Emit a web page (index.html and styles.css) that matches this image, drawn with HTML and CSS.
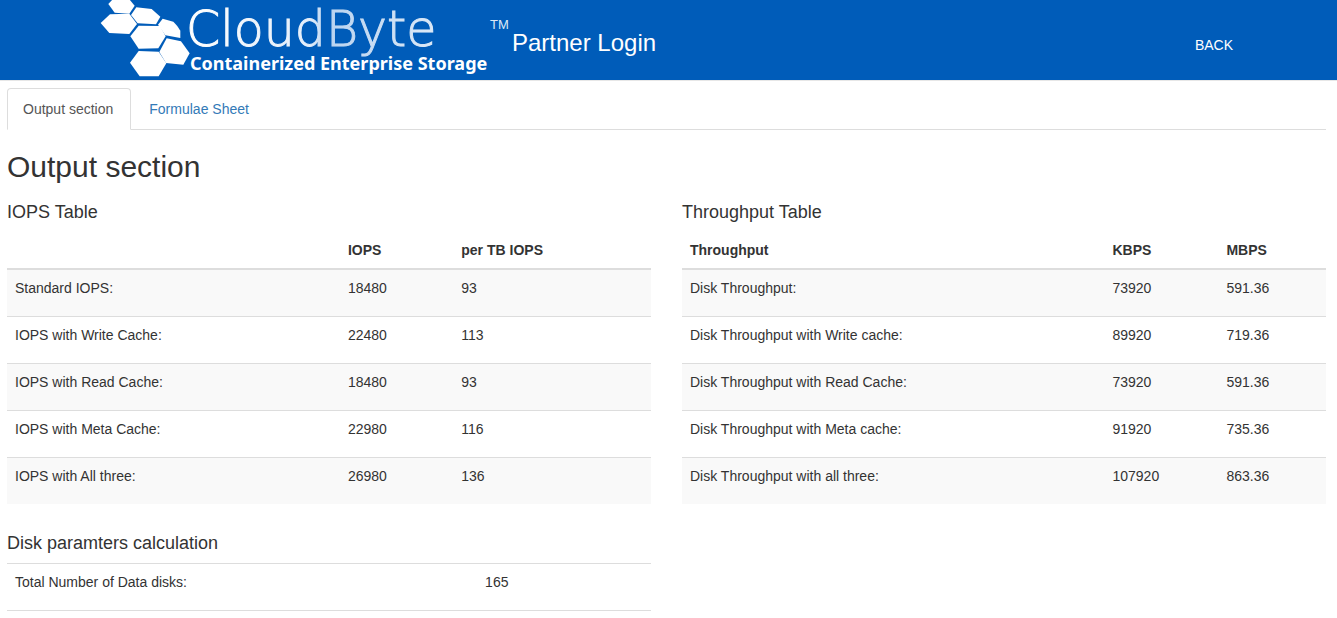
FILE: index.html
```html
<!DOCTYPE html>
<html lang="en">
<head>
<meta charset="utf-8">
<title>CloudByte Partner Login</title>
<link rel="stylesheet" href="styles.css">
</head>
<body>
<header class="navbar">
  <a class="brand" href="#">
    <svg class="logo" width="410" height="80" viewBox="0 0 410 80" role="img" aria-label="CloudByte Containerized Enterprise Storage">
      <defs>
        <linearGradient id="wordmark" x1="0" x2="1" y1="0" y2="0">
          <stop offset="0" stop-color="#fff"/>
          <stop offset="0.5" stop-color="#e4eefa"/>
          <stop offset="0.56" stop-color="#b9d3f0"/>
          <stop offset="1" stop-color="#dce9f7"/>
        </linearGradient>
      </defs>
      <g fill="#fff" transform="scale(0.3333) translate(-30 0)">
        <polygon points="55,12 68,-2 118,-2 134,17 118,41 74,38"/>
        <polygon points="123,45 139,22 185,27 211,50 198,73 143,70"/>
        <polygon points="32,69 60,43 118,41 141,72 118,102 58,99"/>
        <path d="M204 74 218 56 250 65Q264 78 271 92V114L226 106Z"/>
        <polygon points="121,109 146,77 210,78 227,109 205,145 146,146"/>
        <polygon points="208,156 230,115 273,124 299,160 280,194 228,189"/>
        <polygon points="120,188 146,153 206,155 229,190 206,229 149,229"/>
      </g>
      <text class="logo-name" x="86" y="46" fill="url(#wordmark)" stroke="url(#wordmark)">CloudByte</text>
      <text class="logo-mark" x="390" y="29">TM</text>
      <text class="logo-tagline" x="90" y="70">Containerized Enterprise Storage</text>
    </svg>
    <span class="brand-title">Partner Login</span>
  </a>
  <nav><a class="nav-link" href="#">BACK</a></nav>
</header>
<main class="content">
  <nav class="tabs">
    <a class="tab tab-active" href="#output" aria-current="page">Output section</a>
    <a class="tab" href="#formulae">Formulae Sheet</a>
  </nav>
  <h1 class="page-title" id="output">Output section</h1>
  <div class="columns">
    <div>
      <section class="panel">
        <h2 class="panel-title">IOPS Table</h2>
        <table class="table striped iops">
          <colgroup><col class="col-name"><col class="col-value"><col></colgroup>
          <thead><tr><th></th><th>IOPS</th><th>per TB IOPS</th></tr></thead>
          <tbody>
            <tr><td>Standard IOPS:</td><td>18480</td><td>93</td></tr>
            <tr><td>IOPS with Write Cache:</td><td>22480</td><td>113</td></tr>
            <tr><td>IOPS with Read Cache:</td><td>18480</td><td>93</td></tr>
            <tr><td>IOPS with Meta Cache:</td><td>22980</td><td>116</td></tr>
            <tr><td>IOPS with All three:</td><td>26980</td><td>136</td></tr>
          </tbody>
        </table>
      </section>
      <section class="panel">
        <h2 class="panel-title">Disk paramters calculation</h2>
        <table class="table ruled disks">
          <colgroup><col class="col-name"><col></colgroup>
          <tbody>
            <tr><td>Total Number of Data disks:</td><td>165</td></tr>
          </tbody>
        </table>
      </section>
    </div>
    <section class="panel">
      <h2 class="panel-title">Throughput Table</h2>
      <table class="table striped throughput">
        <colgroup><col class="col-name"><col class="col-value"><col></colgroup>
        <thead><tr><th>Throughput</th><th>KBPS</th><th>MBPS</th></tr></thead>
        <tbody>
          <tr><td>Disk Throughput:</td><td>73920</td><td>591.36</td></tr>
          <tr><td>Disk Throughput with Write cache:</td><td>89920</td><td>719.36</td></tr>
          <tr><td>Disk Throughput with Read Cache:</td><td>73920</td><td>591.36</td></tr>
          <tr><td>Disk Throughput with Meta cache:</td><td>91920</td><td>735.36</td></tr>
          <tr><td>Disk Throughput with all three:</td><td>107920</td><td>863.36</td></tr>
        </tbody>
      </table>
    </section>
  </div>
</main>
</body>
</html>
```
FILE: styles.css
```css
* { box-sizing: border-box; }
body {
  margin: 0;
  background: #fff;
  color: #333;
  font: 14px/20px "Liberation Sans", Arial, sans-serif;
}
a { text-decoration: none; }
.navbar {
  display: flex;
  align-items: center;
  justify-content: space-between;
  padding: 0 104px 0 100px;
  background: #005cb9;
  border-bottom: 1px solid #e7e7e7;
}
.brand {
  display: flex;
  align-items: center;
  gap: 2px;
  color: #fff;
}
.logo { display: block; }
.logo-name { font: 200 49px "DejaVu Sans Light", "DejaVu Sans", sans-serif; stroke-width: 1px; }
.logo-mark { font: 13px "Liberation Sans", Arial, sans-serif; fill: #dce9f7; }
.logo-tagline { font: 700 18px "Noto Sans", sans-serif; fill: #fff; }
.brand-title { padding-top: 5px; font-size: 24px; line-height: 30px; }
.nav-link { display: block; padding-top: 10px; color: #fff; }
.content { padding: 7px 11px 0 7px; }
.tabs { display: flex; gap: 2px; border-bottom: 1px solid #ddd; }
.tab {
  margin-bottom: -1px;
  padding: 10px 17px 10px 15px;
  border: 1px solid transparent;
  border-radius: 4px 4px 0 0;
  color: #337ab7;
}
.tab-active {
  border-color: #ddd #ddd #fff;
  background: #fff;
  color: #555;
}
.page-title { margin: 20px 0 19px; font-size: 30px; line-height: 33px; font-weight: 400; }
.columns { display: grid; grid-template-columns: 1fr 1fr; gap: 31px; align-items: start; }
.panel { margin-bottom: 29px; }
.panel-title { margin: 0 0 10px; font-size: 18px; line-height: 20px; font-weight: 400; }
.table { width: 100%; table-layout: fixed; border-spacing: 0; }
.table th, .table td { text-align: left; vertical-align: top; }
.table th { height: 38px; padding: 8px; border-bottom: 2px solid #ddd; }
.table td { padding: 8px 8px 18px; }
.table tr + tr td { border-top: 1px solid #ddd; }
.striped tbody tr:nth-child(odd) { background: #f9f9f9; }
.ruled td { border-top: 1px solid #ddd; border-bottom: 1px solid #ddd; }
.iops .col-name { width: 51.7%; }
.iops .col-value { width: 17.6%; }
.throughput .col-name { width: 65.6%; }
.throughput .col-value { width: 17.7%; }
.disks .col-name { width: 73%; }
```
